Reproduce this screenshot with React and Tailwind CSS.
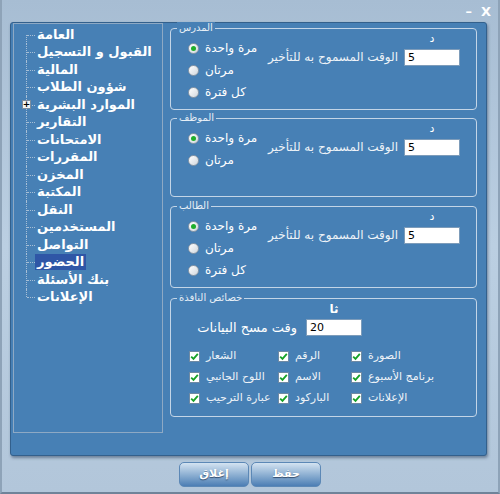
import React from "react";

const treeItems = [
  "العامة",
  "القبول و التسجيل",
  "المالية",
  "شؤون الطلاب",
  "الموارد البشرية",
  "التقارير",
  "الامتحانات",
  "المقررات",
  "المخزن",
  "المكتبة",
  "النقل",
  "المستخدمين",
  "التواصل",
  "الحضور",
  "بنك الأسئلة",
  "الإعلانات",
];

const checkCols = [
  ["الشعار", "اللوح الجانبي", "عبارة الترحيب"],
  ["الرقم", "الاسم", "الباركود"],
  ["الصورة", "برنامج الأسبوع", "الإعلانات"],
];

const Radio = ({ checked, label }) => (
  <div className="flex items-center h-[22px] gap-[6px]">
    <span className="w-[11px] h-[11px] rounded-full border border-[#8d9aa8] bg-gradient-to-br from-white to-[#d2d8de] flex items-center justify-center">
      {checked && <span className="w-[5px] h-[5px] rounded-full bg-[#1fae2b]" />}
    </span>
    <span dir="rtl" className="text-[12px] text-white whitespace-nowrap">{label}</span>
  </div>
);

const Check = ({ label }) => (
  <div className="flex items-center h-[21px] gap-[6px]">
    <span className="w-[11px] h-[11px] shrink-0 border border-[#6f8aa4] bg-white flex items-center justify-center">
      <svg width="9" height="9" viewBox="0 0 9 9">
        <path d="M1.2 4.6 L3.5 6.9 L7.8 1.8" fill="none" stroke="#18a228" strokeWidth="1.8" />
      </svg>
    </span>
    <span dir="rtl" className="text-[11px] text-[#eef3f8] whitespace-nowrap">{label}</span>
  </div>
);

const Field = ({ value }) => (
  <div className="w-[56px] h-[17px] shrink-0 bg-white border border-[#7d9cba] text-[11px] leading-[15px] pl-[3px] text-black">
    {value}
  </div>
);

const Group = ({ title, className, children }) => (
  <div className={`relative border border-[#c3d5e7] rounded-[4px] ${className}`}>
    <span dir="rtl" className="absolute -top-[7px] left-[6px] px-[2px] bg-[#4780b5] text-[10px] leading-[12px] text-[#e6eef6]">
      {title}
    </span>
    {children}
  </div>
);

const DelayGroup = ({ title, options, className }) => (
  <Group title={title} className={`flex ${className}`}>
    <div className="flex flex-col pl-[17px] pt-[8px]">
      {options.map((o, i) => (
        <Radio key={o} label={o} checked={i === 0} />
      ))}
    </div>
    <div className="ml-auto mr-[16px] pt-[3px] flex flex-col items-end">
      <span className="w-[56px] text-center text-[11px] leading-[13px] text-white">د</span>
      <div className="flex items-center gap-[6px] mt-[3px]">
        <span dir="rtl" className="text-[12px] text-[#eef3f8] whitespace-nowrap">الوقت المسموح به للتأخير</span>
        <Field value="5" />
      </div>
    </div>
  </Group>
);

const Tree = () => (
  <div className="w-[150px] h-[410px] border border-[#8ea9c4] pt-[2px]">
    {treeItems.map((item, i) => (
      <div key={item} className="relative h-[17.5px] flex items-center pl-[21px]">
        {/* connector lines */}
        <span
          className={`absolute left-[12px] w-0 border-l border-dotted border-[#a7bfd6] ${
            i === 0 ? "top-1/2 bottom-0" : i === treeItems.length - 1 ? "top-0 h-1/2" : "top-0 bottom-0"
          }`}
        />
        <span className="absolute left-[13px] top-1/2 w-[8px] border-t border-dotted border-[#a7bfd6]" />
        {item === "الموارد البشرية" && (
          <span className="absolute left-[8px] top-[4px] w-[9px] h-[9px] bg-[#f4f4f4] border border-[#7c8c9c] flex items-center justify-center text-[9px] leading-none font-bold text-black">
            +
          </span>
        )}
        <span
          dir="rtl"
          className={`px-[2px] text-[13px] leading-[16px] font-bold text-white whitespace-nowrap ${
            item === "الحضور" ? "bg-[#2f56a6]" : ""
          }`}
        >
          {item}
        </span>
      </div>
    ))}
  </div>
);

export default function App() {
  return (
    <div className="w-[500px] h-[494px] flex flex-col bg-gradient-to-b from-[#a7bdd3] via-[#bbcfe2] to-[#b2c6da] border-l-2 border-r-2 border-b-2 border-l-[#8ea3b8] border-r-[#8ea3b8] border-b-[#6f8399] font-['DejaVu_Sans',sans-serif] overflow-hidden">
      {/* title bar */}
      <div className="h-[22px] flex items-center justify-end gap-[9px] pr-[7px] text-white font-bold">
        <span className="text-[13px] leading-none">–</span>
        <span className="text-[13px] leading-none">X</span>
      </div>

      <div className="ml-[8px] w-[477px] h-[434px] bg-[#4780b5] border border-[#33608c] rounded-[3px] shadow-[1px_2px_3px_rgba(40,60,90,0.5)] flex">
        <div className="ml-[2px]">
          <Tree />
        </div>

        <div className="ml-[7px] w-[307px] pt-[5px] flex flex-col">
          <DelayGroup title="المدرس" options={["مرة واحدة", "مرتان", "كل فترة"]} className="h-[82px]" />
          <DelayGroup title="الموظف" options={["مرة واحدة", "مرتان"]} className="h-[79px] mt-[8px]" />
          <DelayGroup title="الطالب" options={["مرة واحدة", "مرتان", "كل فترة"]} className="h-[82px] mt-[9px]" />

          <Group title="خصائص النافذة" className="h-[119px] mt-[10px]">
            <div className="w-[191px] flex flex-col items-end pt-[3px]">
              <span className="w-[56px] text-center text-[12px] leading-[14px] font-bold text-white">ثا</span>
              <div className="flex items-center gap-[9px] mt-[2px]">
                <span dir="rtl" className="text-[13px] text-white whitespace-nowrap">وقت مسح البيانات</span>
                <Field value="20" />
              </div>
            </div>
            <div className="flex pl-[18px] pt-[8px]">
              {checkCols.map((col, ci) => (
                <div key={ci} className={`flex flex-col ${ci === 0 ? "w-[89px]" : "w-[73px]"}`}>
                  {col.map((c) => (
                    <Check key={c} label={c} />
                  ))}
                </div>
              ))}
            </div>
          </Group>
        </div>
      </div>

      {/* bottom buttons */}
      <div className="flex justify-center gap-[2px] mt-[6px]">
        {["إغلاق", "حفظ"].map((b) => (
          <button
            key={b}
            className="w-[70px] h-[25px] rounded-[5px] border border-[#5c88b6] bg-gradient-to-b from-[#d4e3f1] via-[#8fb1d3] to-[#4c7eb4] text-[11px] font-bold text-white [text-shadow:0_1px_1px_rgba(20,40,70,0.7)]"
          >
            {b}
          </button>
        ))}
      </div>
    </div>
  );
}
